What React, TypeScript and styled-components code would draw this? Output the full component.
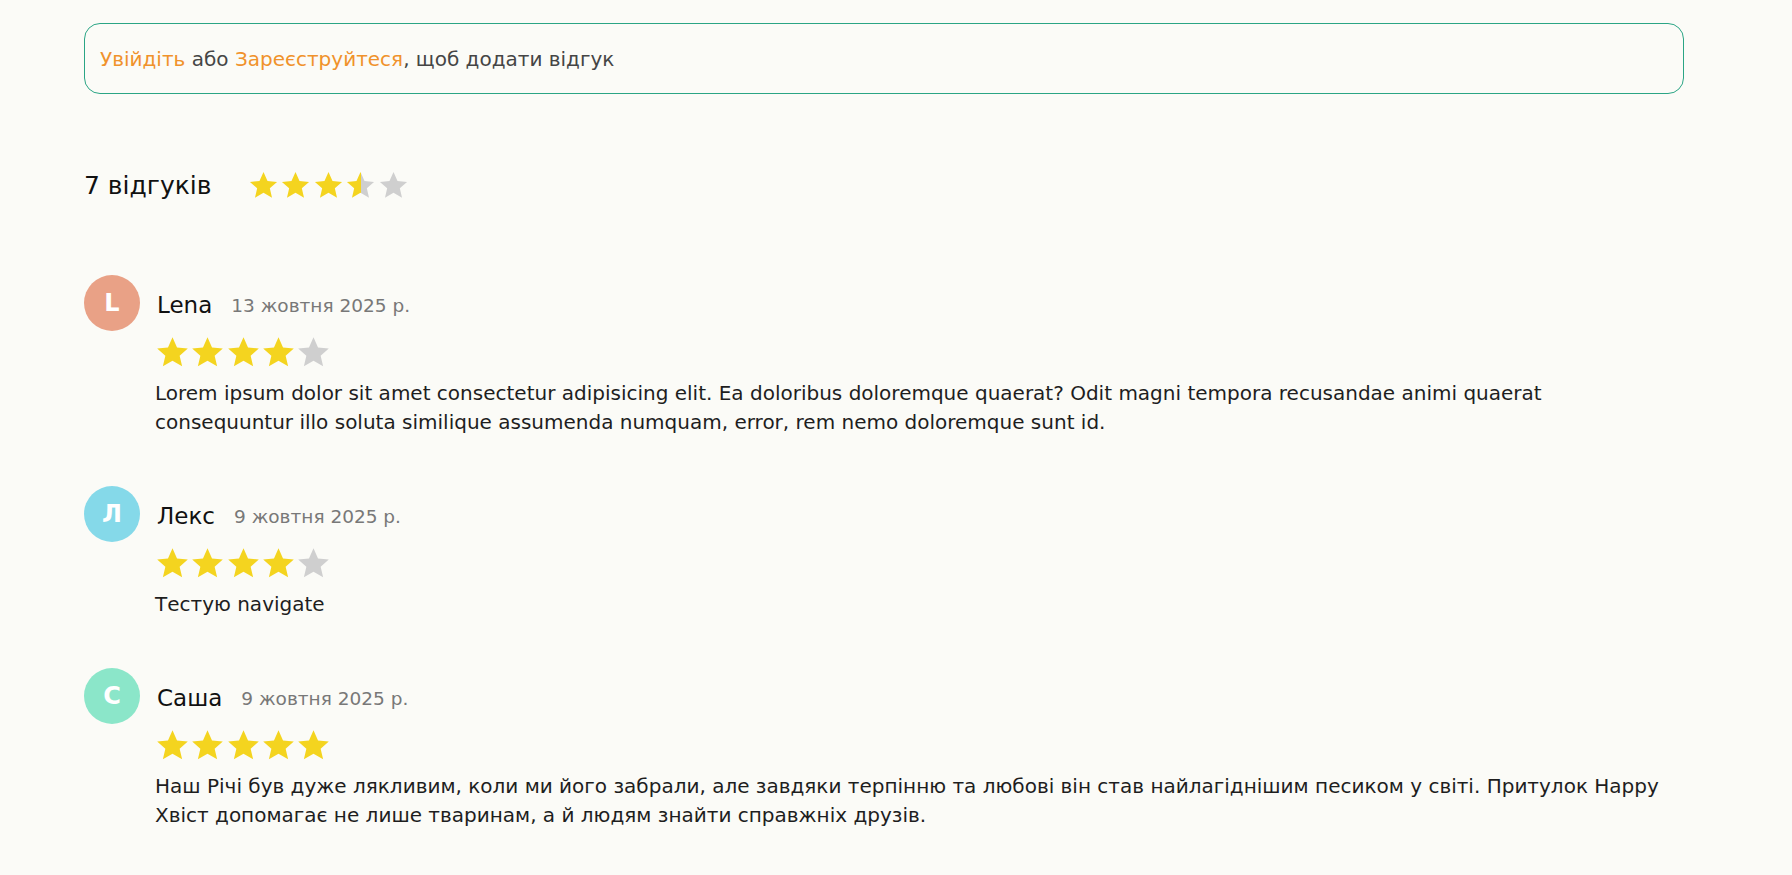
import React from "react"
import styled, { createGlobalStyle } from "styled-components"

const GlobalStyle = createGlobalStyle`
  html, body {
    margin: 0;
    padding: 0;
    background: #fbfbf7;
  }
  body {
    font-family: "DejaVu Sans", "Noto Sans", Arial, sans-serif;
    color: #1e1e1e;
  }
`

interface Review {
  id: number
  name: string
  date: string
  rating: number
  color: string
  text: string
}

const reviews: Review[] = [
  {
    id: 1,
    name: "Lena",
    date: "13 жовтня 2025 р.",
    rating: 4,
    color: "#e9a186",
    text: "Lorem ipsum dolor sit amet consectetur adipisicing elit. Ea doloribus doloremque quaerat? Odit magni tempora recusandae animi quaerat consequuntur illo soluta similique assumenda numquam, error, rem nemo doloremque sunt id.",
  },
  {
    id: 2,
    name: "Лекс",
    date: "9 жовтня 2025 р.",
    rating: 4,
    color: "#85d9e9",
    text: "Тестую navigate",
  },
  {
    id: 3,
    name: "Саша",
    date: "9 жовтня 2025 р.",
    rating: 5,
    color: "#8be6c9",
    text: "Наш Річі був дуже лякливим, коли ми його забрали, але завдяки терпінню та любові він став найлагіднішим песиком у світі. Притулок Happy Хвіст допомагає не лише тваринам, а й людям знайти справжніх друзів.",
  },
]

const STAR = "M12 1.6l3.1 6.9 7.4.7-5.6 5 1.7 7.3L12 17.7l-6.6 3.8 1.7-7.3-5.6-5 7.4-.7z"

const Star: React.FC<{ fill: number; size: number; id: string }> = ({ fill, size, id }) => (
  <svg width={size} height={size} viewBox="0 0 24 24">
    <defs>
      <linearGradient id={id}>
        <stop offset={`${fill * 100}%`} stopColor="#f4d41f" />
        <stop offset={`${fill * 100}%`} stopColor="#cfcfcf" />
      </linearGradient>
    </defs>
    <path d={STAR} fill={`url(#${id})`} />
  </svg>
)

const Stars: React.FC<{ value: number; size: number; gap: number; name: string }> = ({
  value,
  size,
  gap,
  name,
}) => (
  <StarRow $gap={gap}>
    {[0, 1, 2, 3, 4].map((i) => (
      <Star key={i} id={`${name}-${i}`} size={size} fill={Math.max(0, Math.min(1, value - i))} />
    ))}
  </StarRow>
)

export default function App() {
  return (
    <>
      <GlobalStyle />
      <Page>
        <LoginBox>
          <Link href="#">Увійдіть</Link> або <Link href="#">Зареєструйтеся</Link>, щоб додати відгук
        </LoginBox>

        <Summary>
          <Count>7 відгуків</Count>
          <Stars value={3.5} size={31} gap={1.5} name="sum" />
        </Summary>

        <List>
          {reviews.map((r) => (
            <Item key={r.id}>
              <Header>
                <Avatar $color={r.color}>{r.name[0]}</Avatar>
                <Name>{r.name}</Name>
                <DateText>{r.date}</DateText>
              </Header>
              <Body>
                <Stars value={r.rating} size={35} gap={0.3} name={`r${r.id}`} />
                <Text>{r.text}</Text>
              </Body>
            </Item>
          ))}
        </List>
      </Page>
    </>
  )
}

const Page = styled.div`
  width: 1600px;
  padding: 23px 0 40px 84px;
`

const LoginBox = styled.div`
  box-sizing: border-box;
  height: 71px;
  display: flex;
  align-items: center;
  padding: 0 15px;
  border: 1px solid #2aa585;
  border-radius: 16px;
  font-size: 20px;
  color: #454545;
  white-space: pre;
`

const Link = styled.a`
  color: #f0922b;
  text-decoration: none;
`

const Summary = styled.div`
  display: flex;
  align-items: center;
  gap: 36px;
  margin-top: 71px;
  height: 40px;
`

const Count = styled.h2`
  margin: 0;
  font-size: 25px;
  font-weight: 400;
  color: #111;
`

const StarRow = styled.div<{ $gap: number }>`
  display: flex;
  gap: ${(p) => p.$gap}px;
`

const List = styled.div`
  display: flex;
  flex-direction: column;
  gap: 49px;
  margin-top: 70px;
`

const Item = styled.article`
  display: flex;
  flex-direction: column;
`

const Header = styled.div`
  display: flex;
  align-items: center;
  height: 56px;
`

const Avatar = styled.div<{ $color: string }>`
  width: 56px;
  height: 56px;
  border-radius: 50%;
  background: ${(p) => p.$color};
  color: #fff;
  font-size: 24px;
  font-weight: 700;
  display: flex;
  align-items: center;
  justify-content: center;
  margin-right: 17px;
`

const Name = styled.span`
  font-size: 23px;
  color: #111;
  margin-right: 19px;
  padding-top: 4px;
`

const DateText = styled.span`
  font-size: 18.5px;
  color: #787878;
  padding-top: 4px;
`

const Body = styled.div`
  padding-left: 71px;
  margin-top: 4px;
`

const Text = styled.p`
  margin: 9px 0 0;
  max-width: 1512px;
  font-size: 20px;
  line-height: 29px;
  color: #1e1e1e;
`
